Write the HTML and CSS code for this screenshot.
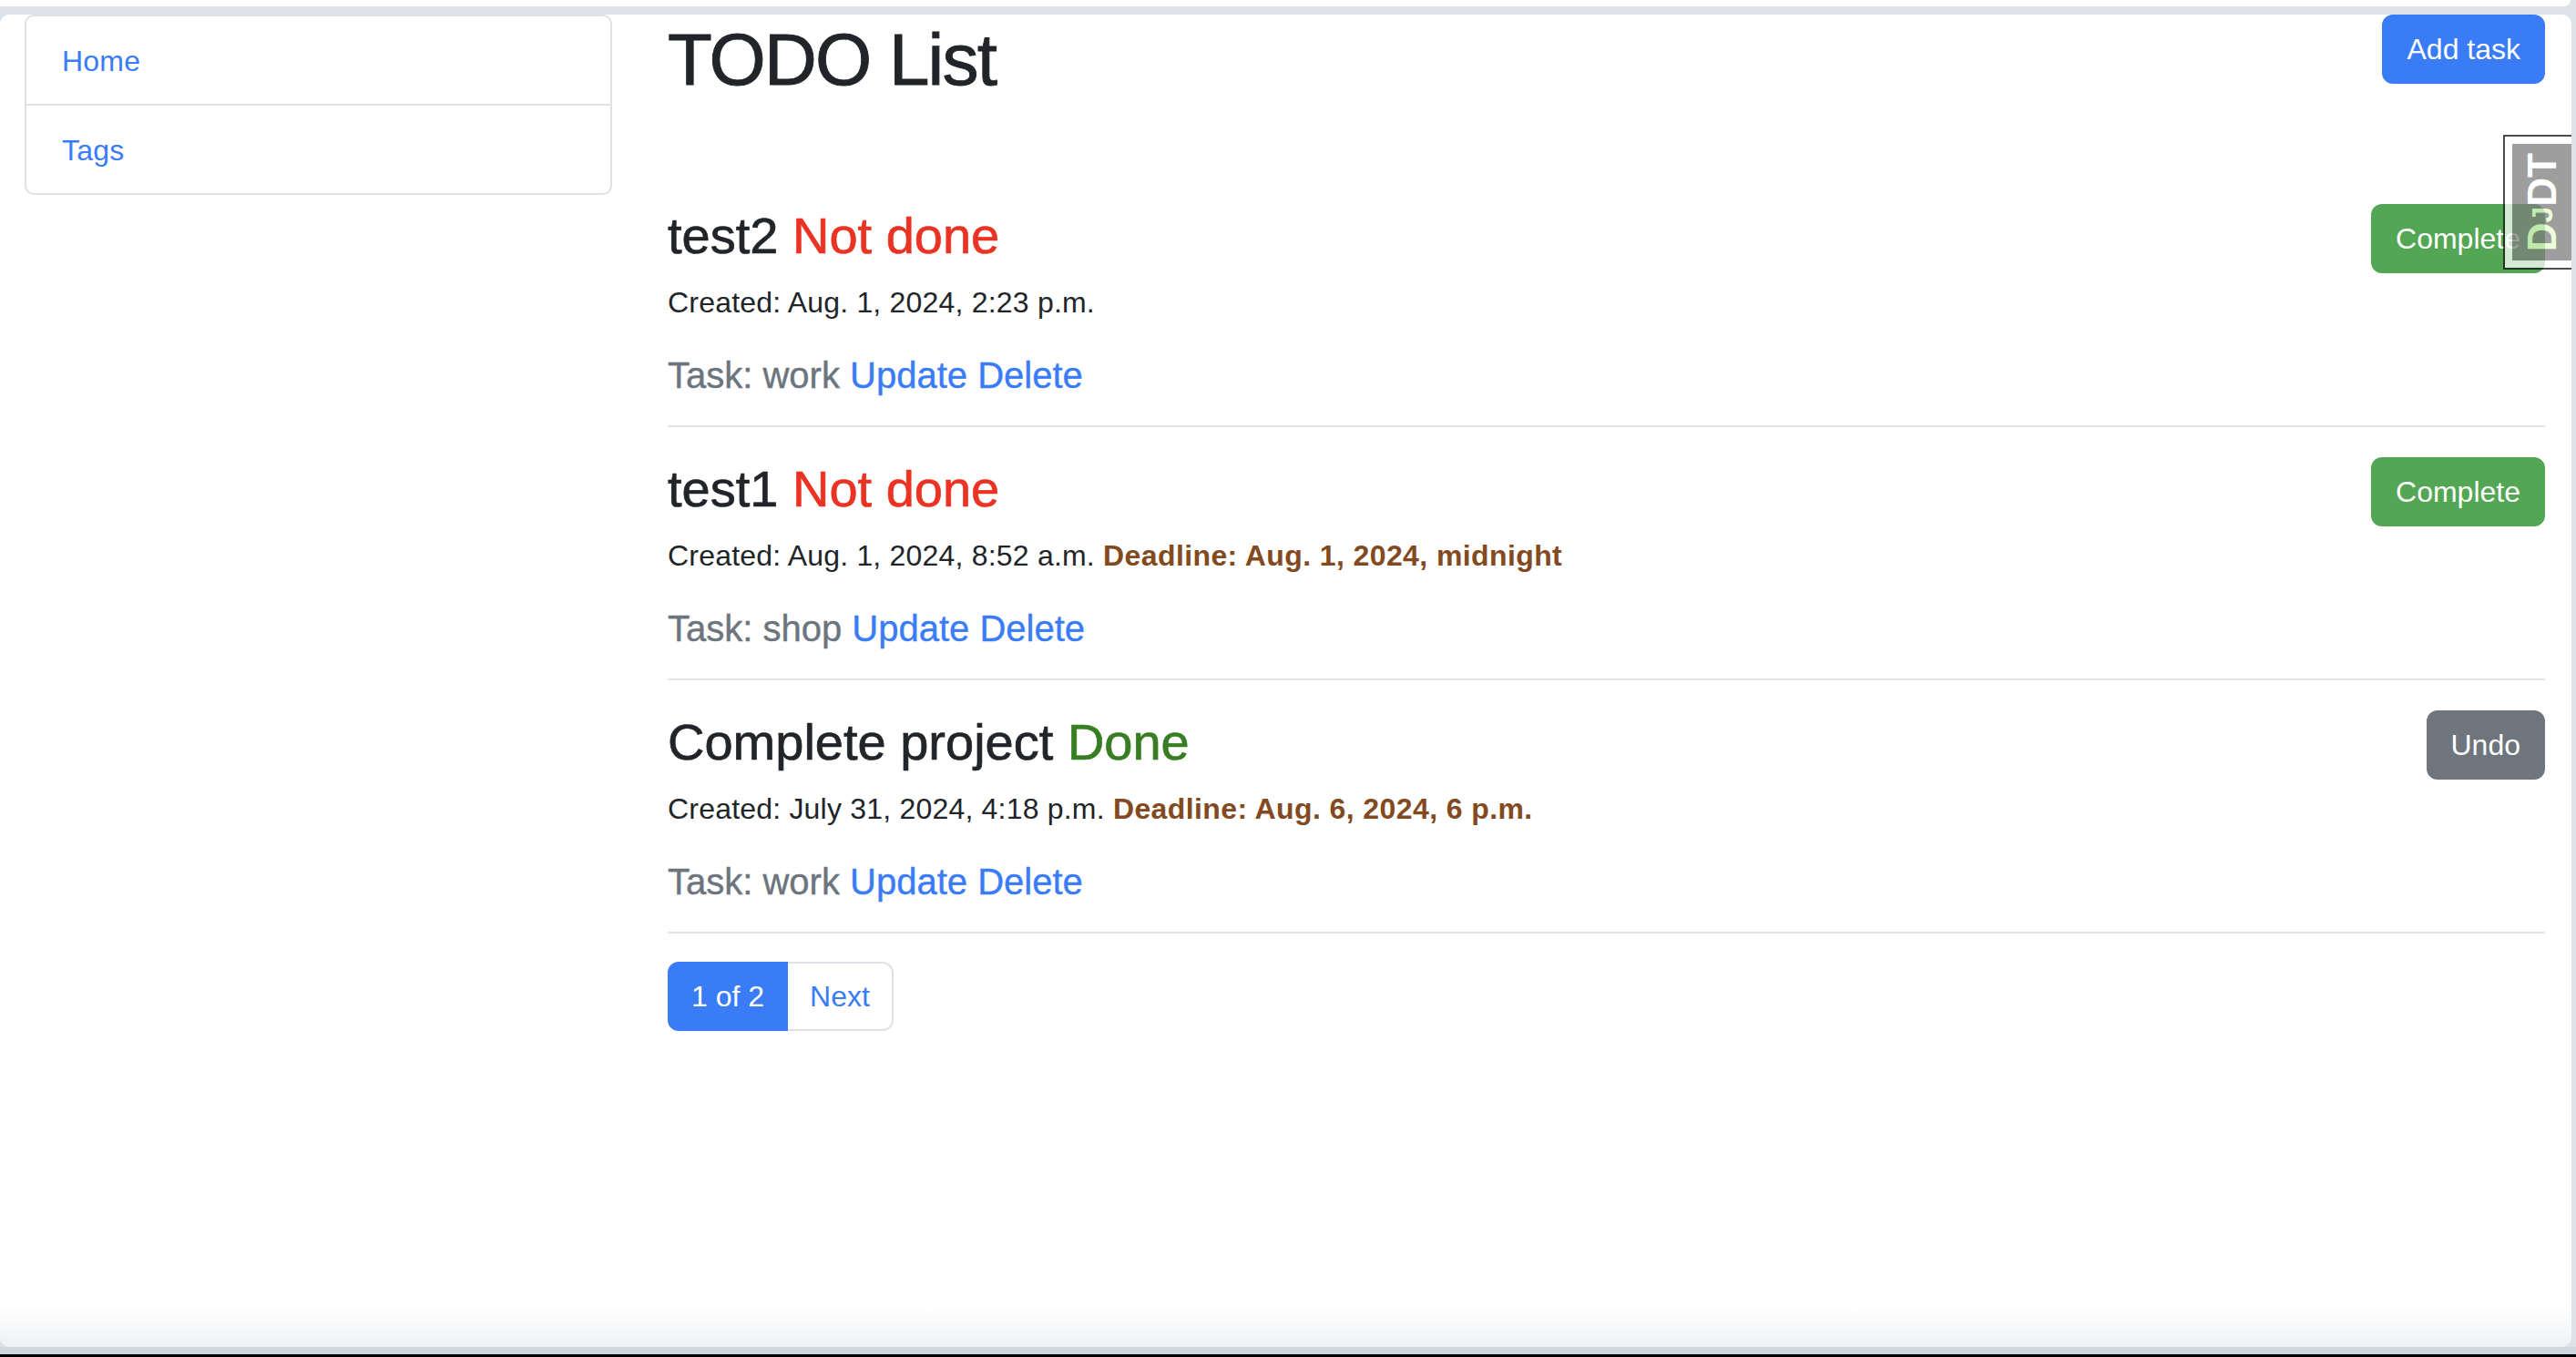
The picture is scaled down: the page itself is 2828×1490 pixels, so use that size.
FILE: index.html
```html
<!DOCTYPE html>
<html lang="en">
<head>
<meta charset="utf-8">
<title>TODO List</title>
<link rel="stylesheet" href="styles.css">
</head>
<body>
<div class="topbar"></div>
<div class="viewport">
  <div class="page">
    <aside class="sidebar">
      <ul class="list-group">
        <li class="list-item"><a href="#">Home</a></li>
        <li class="list-item"><a href="#">Tags</a></li>
      </ul>
    </aside>
    <main class="main">
      <div class="header">
        <h1 class="title">TODO List</h1>
        <a class="btn btn-primary" href="#">Add task</a>
      </div>

      <div class="task">
        <div class="task-body">
          <h3 class="task-title">test2 <span class="status-not">Not done</span></h3>
          <p class="task-meta">Created: Aug. 1, 2024, 2:23 p.m.</p>
          <h5 class="task-tag">Task: work <a href="#">Update</a> <a href="#">Delete</a></h5>
        </div>
        <button class="btn btn-success" type="button">Complete</button>
      </div>
      <hr class="divider">

      <div class="task">
        <div class="task-body">
          <h3 class="task-title">test1 <span class="status-not">Not done</span></h3>
          <p class="task-meta">Created: Aug. 1, 2024, 8:52 a.m. <strong class="deadline">Deadline: Aug. 1, 2024, midnight</strong></p>
          <h5 class="task-tag">Task: shop <a href="#">Update</a> <a href="#">Delete</a></h5>
        </div>
        <button class="btn btn-success" type="button">Complete</button>
      </div>
      <hr class="divider">

      <div class="task">
        <div class="task-body">
          <h3 class="task-title">Complete project <span class="status-done">Done</span></h3>
          <p class="task-meta">Created: July 31, 2024, 4:18 p.m. <strong class="deadline">Deadline: Aug. 6, 2024, 6 p.m.</strong></p>
          <h5 class="task-tag">Task: work <a href="#">Update</a> <a href="#">Delete</a></h5>
        </div>
        <button class="btn btn-secondary" type="button">Undo</button>
      </div>
      <hr class="divider">

      <nav class="pagination">
        <span class="page-link active">1 of 2</span>
        <a class="page-link" href="#">Next</a>
      </nav>
    </main>
  </div>

  <div class="djdt">
    <div class="djdt-btn"><span class="djdt-text"><span class="djdt-d">D</span><span class="djdt-j">J</span>DT</span></div>
  </div>
</div>
</body>
</html>
```

FILE: styles.css
```css
* {
  box-sizing: border-box;
}

html, body {
  margin: 0;
  padding: 0;
  width: 2828px;
  height: 1490px;
  overflow: hidden;
}

body {
  font-family: "Liberation Sans", Arial, sans-serif;
  color: #212529;
  background: linear-gradient(to bottom, #dbe2e8 0, #dbe2e8 1479px, #cfd7df 1479px, #cfd7df 1487px, #000 1487px);
}

a {
  color: #3a7cf6;
  text-decoration: none;
}

.topbar {
  height: 7px;
  width: 2822px;
  background: #fff;
  border-bottom-right-radius: 10px;
}

.viewport {
  position: relative;
  margin-top: 9px;
  width: 2823px;
  height: 1463px;
  border-radius: 10px;
  overflow: hidden;
  background: linear-gradient(to bottom, #fff calc(100% - 45px), #eff1f3 100%);
}

.page {
  display: flex;
  gap: 61px;
  padding: 0 29px 0 27px;
}

.sidebar {
  width: 645px;
  flex: 0 0 645px;
}

.list-group {
  list-style: none;
  margin: 0;
  padding: 0;
  border: 2px solid #dfe1e3;
  border-radius: 10px;
}

.list-item {
  padding: 25px 39px 23px;
  font-size: 32px;
  line-height: 48px;
  letter-spacing: 0.2px;
}

.list-item + .list-item {
  border-top: 2px solid #dfe1e3;
}

.main {
  flex: 1 1 auto;
  min-width: 0;
}

.header {
  display: flex;
  justify-content: space-between;
  align-items: flex-start;
  margin-bottom: 110px;
}

.title {
  margin: 2px 0 0;
  font-size: 80px;
  line-height: 96px;
  font-weight: 500;
  letter-spacing: -1.8px;
  -webkit-text-stroke: 0.9px currentColor;
}

.btn {
  display: inline-block;
  font-family: inherit;
  font-size: 32px;
  line-height: 48px;
  padding: 12px 25px;
  border: 2px solid transparent;
  border-radius: 12px;
  color: #fff;
  white-space: nowrap;
  cursor: pointer;
}

.btn-primary {
  background: #3a7cf6;
  border-color: #3a7cf6;
}

.btn-success {
  background: #53a653;
  border-color: #53a653;
}

.btn-secondary {
  background: #6e757c;
  border-color: #6e757c;
}

.task {
  display: flex;
  justify-content: space-between;
  align-items: flex-start;
}

.task-title {
  margin: 1px 0 16px;
  font-size: 56px;
  line-height: 67px;
  font-weight: 500;
  -webkit-text-stroke: 0.7px currentColor;
}

.status-not {
  color: #ea3323;
}

.status-done {
  color: #377e22;
}

.task-meta {
  margin: 0 0 32px;
  font-size: 32px;
  line-height: 48px;
  letter-spacing: 0.2px;
}

.deadline {
  color: #834a1f;
  font-weight: 700;
  letter-spacing: 0.4px;
}

.task-tag {
  margin: 0;
  font-size: 40px;
  line-height: 48px;
  font-weight: 500;
  color: #6c757d;
  -webkit-text-stroke: 0.4px currentColor;
}

.divider {
  margin: 31px 0 33px;
  border: 0;
  border-top: 2px solid #e3e4e6;
  height: 0;
}

.pagination {
  display: flex;
  margin-top: -2px;
}

.page-link {
  display: block;
  font-size: 32px;
  line-height: 48px;
  padding: 12px 24px;
  border: 2px solid #dee2e6;
  color: #3a7cf6;
  background: #fff;
}

.page-link:first-child {
  border-radius: 12px 0 0 12px;
}

.page-link:last-child {
  border-radius: 0 12px 12px 0;
  margin-left: -2px;
}

.page-link.active {
  background: #3a7cf6;
  border-color: #3a7cf6;
  color: #fff;
  position: relative;
  z-index: 1;
}

.djdt {
  position: absolute;
  top: 132px;
  right: 0;
  background: #fff;
  border: 2px solid #111;
  border-right: 0;
  opacity: 0.75;
}

.djdt-btn {
  background: #000;
  opacity: 0.5;
  border: 8px solid #fff;
  border-right: 0;
  padding: 10px 0;
  color: #fff;
  font-weight: 700;
  width: 73px;
  display: flex;
  justify-content: center;
}

.djdt-text {
  writing-mode: vertical-rl;
  transform: rotate(180deg);
  font-size: 44px;
  line-height: 64px;
  font-weight: 700;
}

.djdt-d {
  color: #cf9;
}

.djdt-j {
  color: #cf9;
  font-size: 32px;
}
```
